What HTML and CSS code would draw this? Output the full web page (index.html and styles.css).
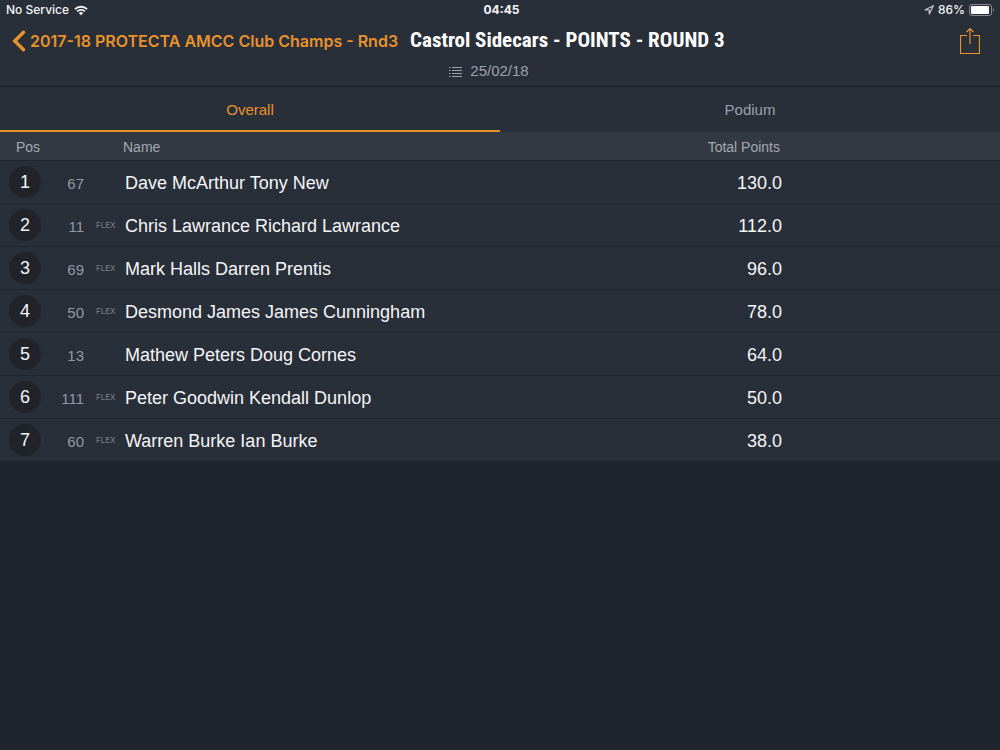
FILE: index.html
```html
<!DOCTYPE html>
<html lang="en">
<head>
<meta charset="utf-8">
<meta name="viewport" content="width=device-width, initial-scale=1">
<title>Castrol Sidecars - POINTS - ROUND 3</title>
<link rel="stylesheet" href="styles.css">
</head>
<body>
<header class="header">
  <div class="status">
    <div class="status-left">
      <span>No Service</span>
      <svg class="wifi" width="14" height="11" viewBox="0 0 15 11" aria-hidden="true">
        <path d="M1 4.1a9.4 9.4 0 0 1 13 0M3.3 6.5a6 6 0 0 1 8.4 0" fill="none" stroke="currentColor" stroke-width="1.9"/>
        <path d="M7.5 10.6 5.1 8.2a3.4 3.4 0 0 1 4.8 0z" fill="currentColor"/>
      </svg>
    </div>
    <time class="clock">04:45</time>
    <div class="status-right">
      <svg width="10" height="10" viewBox="0 0 10 10" aria-hidden="true"><path d="M.8 5 9.300.8 5.200 9.300V5z" fill="none" stroke="#c5c8cd" stroke-width="1.200"/></svg>
      <span class="percent">86%</span>
      <svg width="26" height="12" viewBox="0 0 26 12" aria-hidden="true">
        <rect x=".5" y=".5" width="22" height="11" rx="2.5" fill="none" stroke="#858990"/>
        <rect x="2" y="2" width="18" height="8" rx="1" fill="#fff"/>
        <path d="M24 4v4c1.4-.5 1.4-3.5 0-4z" fill="#858990"/>
      </svg>
    </div>
  </div>
  <div class="nav">
    <a class="back" href="#">
      <svg width="14" height="22" viewBox="0 0 14 22" aria-hidden="true"><path d="M11.5 2.2 2.700 11l8.800 8.800" fill="none" stroke="currentColor" stroke-width="3.4" stroke-linecap="round"/></svg>
      <span>2017-18 PROTECTA AMCC Club Champs - Rnd3</span>
    </a>
    <h1 class="title">Castrol Sidecars - POINTS - ROUND 3</h1>
    <button class="share" type="button" aria-label="Share">
      <svg width="20" height="28" viewBox="0 0 20 28" aria-hidden="true"><path d="M7 8.500H.5v18h19v-18H13M10 17V1.500M6.500 5 10 1.500 13.500 5" fill="none" stroke="currentColor" stroke-width="1.200"/></svg>
    </button>
  </div>
  <div class="date">
    <svg width="13" height="11" viewBox="0 0 13 11" aria-hidden="true"><path d="M0 1.500h1.500M3 1.500h10M0 4.500h1.500M3 4.500h10M0 7.500h1.500M3 7.500h10M0 10.500h1.500M3 10.500h10" stroke="currentColor"/></svg>
    <time datetime="2018-02-25">25/02/18</time>
  </div>
</header>
<main>
  <div class="tabs" role="tablist">
    <button class="tab tab-active" type="button" role="tab" aria-selected="true">Overall</button>
    <button class="tab" type="button" role="tab" aria-selected="false">Podium</button>
  </div>
  <table class="results">
    <colgroup><col class="col-pos"><col class="col-num"><col class="col-tag"><col class="col-name"><col class="col-points"><col class="col-rest"></colgroup>
    <thead>
      <tr><th class="pos" scope="col">Pos</th><th></th><th></th><th class="name" scope="col">Name</th><th class="points" scope="col">Total Points</th><th></th></tr>
    </thead>
    <tbody>
      <tr><td class="pos"><span class="badge">1</span></td><td class="num">67</td><td class="tag"></td><td class="name">Dave McArthur Tony New</td><td class="points">130.0</td><td></td></tr>
      <tr><td class="pos"><span class="badge">2</span></td><td class="num">11</td><td class="tag">FLEX</td><td class="name">Chris Lawrance Richard Lawrance</td><td class="points">112.0</td><td></td></tr>
      <tr><td class="pos"><span class="badge">3</span></td><td class="num">69</td><td class="tag">FLEX</td><td class="name">Mark Halls Darren Prentis</td><td class="points">96.0</td><td></td></tr>
      <tr><td class="pos"><span class="badge">4</span></td><td class="num">50</td><td class="tag">FLEX</td><td class="name">Desmond James James Cunningham</td><td class="points">78.0</td><td></td></tr>
      <tr><td class="pos"><span class="badge">5</span></td><td class="num">13</td><td class="tag"></td><td class="name">Mathew Peters Doug Cornes</td><td class="points">64.0</td><td></td></tr>
      <tr><td class="pos"><span class="badge">6</span></td><td class="num">111</td><td class="tag">FLEX</td><td class="name">Peter Goodwin Kendall Dunlop</td><td class="points">50.0</td><td></td></tr>
      <tr><td class="pos"><span class="badge">7</span></td><td class="num">60</td><td class="tag">FLEX</td><td class="name">Warren Burke Ian Burke</td><td class="points">38.0</td><td></td></tr>
    </tbody>
  </table>
</main>
</body>
</html>
```
FILE: styles.css
```css
* { box-sizing: border-box; }
body {
  margin: 0;
  min-height: 100vh;
  background: #20242c;
  color: #f4f5f7;
  font-family: "Liberation Sans", Arial, sans-serif;
}
svg { display: block; flex: none; }
button { border: 0; padding: 0; background: none; font: inherit; cursor: pointer; }

.header { background: #292f39; border-bottom: 1px solid #171b22; }
.status {
  display: grid;
  grid-template-columns: 1fr auto 1fr;
  align-items: center;
  height: 20px;
  padding: 0 5px 0 6px;
  font: 500 12px/20px Inter, sans-serif;
}
.status-left, .status-right { display: flex; align-items: center; gap: 5px; }
.status-right { justify-content: flex-end; gap: 4px; }
.clock { padding-left: 2px; font-weight: 700; }

.nav { display: flex; align-items: center; height: 42px; padding: 0 20px 0 12px; }
.back {
  display: flex;
  align-items: center;
  gap: 4px;
  color: #e8922c;
  font: 600 16px/24px Inter, sans-serif;
  text-decoration: none;
  white-space: nowrap;
}
.title {
  margin: 0 0 0 12px;
  padding-bottom: 2px;
  color: #fff;
  font: 700 21px/28px "Liberation Sans Narrow", "Roboto Condensed", "DejaVu Sans Condensed", sans-serif;
  white-space: nowrap;
}
.share { margin-left: auto; color: #e8922c; }
.date {
  display: flex;
  justify-content: center;
  align-items: center;
  gap: 8px;
  height: 24px;
  padding: 0 22px 6px 0;
  color: #9ca1ab;
  font-size: 15px;
  line-height: 18px;
}

.tabs { display: flex; background: #292f39; }
.tab {
  flex: 1;
  height: 45px;
  padding-top: 2px;
  border-bottom: 2px solid transparent;
  color: #9ca1ab;
  font-size: 15px;
}
.tab-active { border-color: #e8922c; color: #e8922c; }

.results { width: 100%; table-layout: fixed; border-collapse: collapse; background: #292f39; }
.results th, .results td { padding: 3px 0 0; text-align: left; white-space: nowrap; }
.results th { height: 28px; background: #333943; color: #a4a8b1; font-size: 14px; font-weight: 400; }
.results td { height: 43px; border-top: 1px solid #20252e; font-size: 18px; }
.col-pos { width: 50px; }
.col-num { width: 34px; }
.col-tag { width: 39px; }
.col-points { width: 20%; }
.col-rest { width: 21.8%; }
.results td.pos { padding: 1px 0 0 9px; }
.results th.pos { padding-left: 16px; }
.results td.name { padding-left: 2px; }
.badge {
  display: block;
  width: 32px;
  height: 32px;
  border-radius: 50%;
  background: #20242a;
  line-height: 33px;
  text-align: center;
}
.results .num { color: #9298a3; font-size: 15px; text-align: right; }
.results .tag { padding: 0 0 0 12px; color: #7d828c; font: 8px Inter, sans-serif; }
.results .points { text-align: right; }
.results th.points { padding-right: 2px; }
```
